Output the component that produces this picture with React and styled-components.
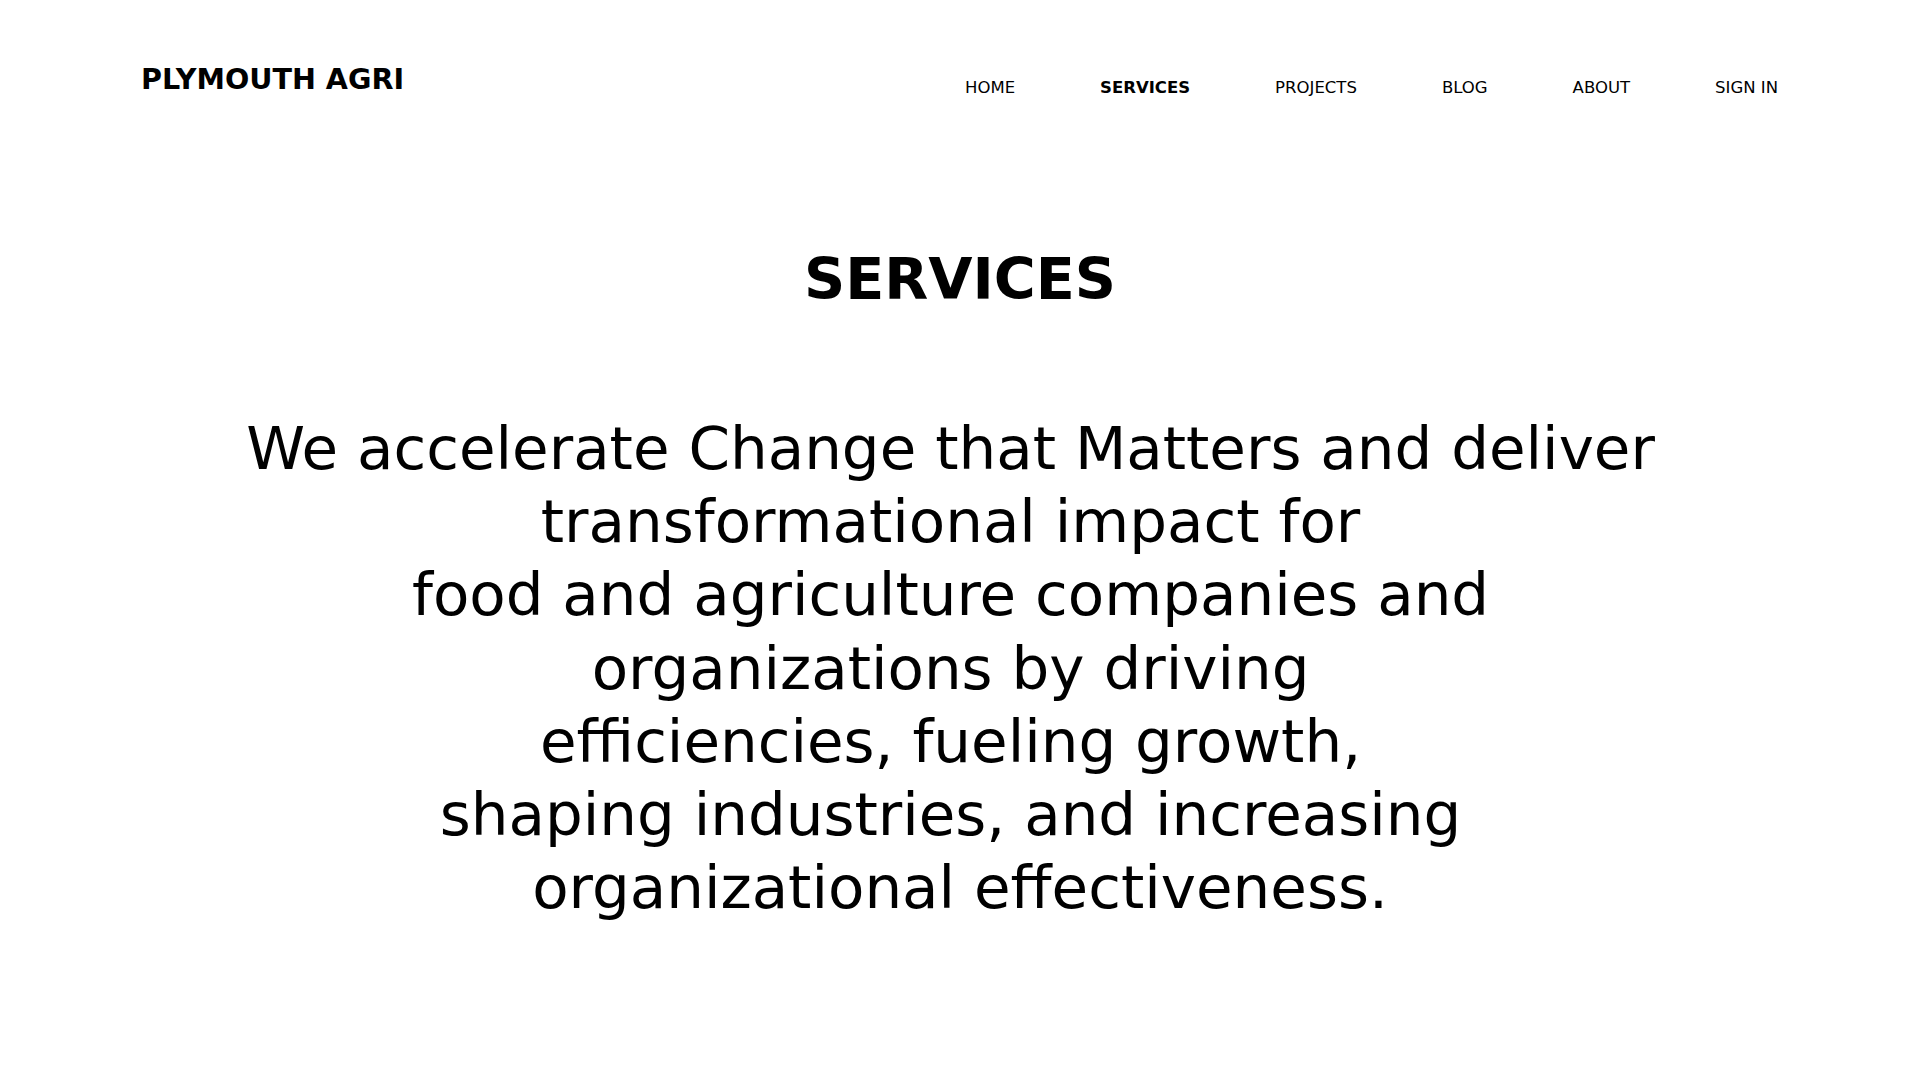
import styled, { createGlobalStyle } from 'styled-components';

const navLinks = ['HOME', 'SERVICES', 'PROJECTS', 'BLOG', 'ABOUT', 'SIGN IN'];

const App = () => {
  return (
    <>
      <GlobalStyle />
      <Page>
        <Header>
          <Logo href="#">PLYMOUTH AGRI</Logo>
          <Nav>
            {navLinks.map((link) => (
              <NavLink key={link} href="#" $active={link === 'SERVICES'}>
                {link}
              </NavLink>
            ))}
          </Nav>
        </Header>

        <Main>
          <Title>SERVICES</Title>
          <Intro>
            We accelerate Change that Matters and deliver transformational
            impact for{' '}
            <br />
            food and agriculture companies and organizations by driving{' '}
            <br />
            efficiencies, fueling growth,{' '}
            <br />
            shaping industries, and increasing organizational effectiveness.
          </Intro>
        </Main>
      </Page>
    </>
  );
};

export default App;

const GlobalStyle = createGlobalStyle`
  html, body {
    margin: 0;
    padding: 0;
    background: #fff;
  }

  body {
    font-family: 'DejaVu Sans', 'Liberation Sans', sans-serif;
    color: #000;
  }
`;

const Page = styled.div`
  min-height: 100vh;
  background: #fff;
`;

const Header = styled.header`
  display: flex;
  justify-content: space-between;
  align-items: flex-start;
  padding: 65px 142px 0 141px;
`;

const Logo = styled.a`
  font-size: 28.6px;
  line-height: 1;
  font-weight: 700;
  &:any-link {
    color: #000;
    text-decoration: none;
  }
`;

const Nav = styled.nav`
  display: flex;
  gap: 85px;
  margin-top: 15px;
`;

const NavLink = styled.a`
  font-size: 16.5px;
  line-height: 1;
  font-weight: ${(p) => (p.$active ? 700 : 400)};
  &:any-link {
    color: #000;
    text-decoration: none;
  }
`;

const Main = styled.main`
  display: flex;
  flex-direction: column;
  align-items: center;
`;

const Title = styled.h1`
  margin: 154px 0 0;
  font-size: 57.2px;
  line-height: 1;
  font-weight: 700;
`;

const Intro = styled.p`
  margin: 104px 0 0;
  max-width: 1440px;
  font-size: 59.5px;
  line-height: 73.3px;
  font-weight: 400;
  text-align: center;
  white-space: break-spaces;
`;
